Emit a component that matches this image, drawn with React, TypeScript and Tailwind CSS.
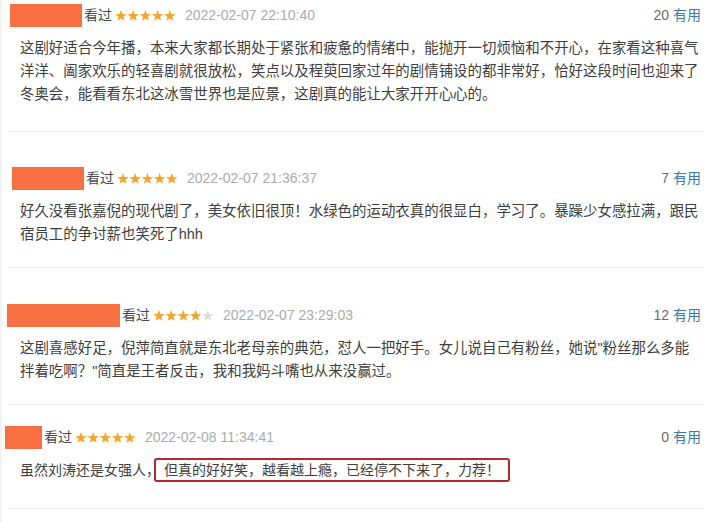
const STAR = "6,0 7.47,3.98 11.71,4.15 8.38,6.77 9.53,10.85 6,8.5 2.47,10.85 3.62,6.77 0.29,4.15 4.53,3.98";

type Review = {
  nameWidth: string;
  nameOffset: string;
  rating: number;
  time: string;
  votes: number;
  wrap: string;
  body: string;
  highlight?: string;
  textSize: string;
};

const reviews: Review[] = [
  {
    nameWidth: "w-[72px]",
    nameOffset: "ml-[8px]",
    rating: 5,
    time: "2022-02-07 22:10:40",
    votes: 20,
    wrap: "pt-[4px] pb-[25px]",
    textSize: "text-[14.45px]",
    body:
      "这剧好适合今年播，本来大家都长期处于紧张和疲惫的情绪中，能抛开一切烦恼和不开心，在家看这种喜气洋洋、阖家欢乐的轻喜剧就很放松，笑点以及程萸回家过年的剧情铺设的都非常好，恰好这段时间也迎来了冬奥会，能看看东北这冰雪世界也是应景，这剧真的能让大家开开心心的。",
  },
  {
    nameWidth: "w-[72px]",
    nameOffset: "ml-[10px]",
    rating: 5,
    time: "2022-02-07 21:36:37",
    votes: 7,
    wrap: "pt-[35px] pb-[21px]",
    textSize: "text-[14.45px]",
    body: "好久没看张嘉倪的现代剧了，美女依旧很顶！水绿色的运动衣真的很显白，学习了。暴躁少女感拉满，跟民宿员工的争讨薪也笑死了hhh",
  },
  {
    nameWidth: "w-[113px]",
    nameOffset: "ml-[5px]",
    rating: 4,
    time: "2022-02-07 23:29:03",
    votes: 12,
    wrap: "pt-[36px] pb-[21px]",
    textSize: "text-[14.45px]",
    body: "这剧喜感好足，倪萍简直就是东北老母亲的典范，怼人一把好手。女儿说自己有粉丝，她说\"粉丝那么多能拌着吃啊？\"简直是王者反击，我和我妈斗嘴也从来没赢过。",
  },
  {
    nameWidth: "w-[37px]",
    nameOffset: "ml-[3px]",
    rating: 5,
    time: "2022-02-08 11:34:41",
    votes: 0,
    wrap: "pt-[21px] pb-[26px]",
    textSize: "text-[14px]",
    body: "虽然刘涛还是女强人，",
    highlight: "但真的好好笑，越看越上瘾，已经停不下来了，力荐！",
  },
];

function Stars({ rating }: { rating: number }) {
  return (
    <svg width="61" height="12" viewBox="0 0 61 12" className="ml-[3px] shrink-0">
      {[0, 1, 2, 3, 4].map((i) => (
        <polygon
          key={i}
          points={STAR}
          transform={`translate(${i * 12.2} 0)`}
          fill={i < rating ? "#f5a52a" : "#dcdcdc"}
        />
      ))}
    </svg>
  );
}

function ReviewItem({ review }: { review: Review }) {
  return (
    <>
      <div className={review.wrap}>
        <div className="flex h-[23px] items-center pr-[15px] text-[14px]">
          <div className={`h-[23px] shrink-0 bg-[#f86f42] ${review.nameWidth} ${review.nameOffset}`} />
          <span className="ml-[2px] text-[#4a4a4a]">看过</span>
          <Stars rating={review.rating} />
          <span className="ml-[9px] text-[#ababab]">{review.time}</span>
          <span className="ml-auto text-[#6b6b6b]">{review.votes}</span>
          <span className="ml-[4px] text-[#3b78b0]">有用</span>
        </div>
        <p className={`mt-[10px] pl-[18px] pr-[15px] leading-[23px] text-[#3e3e3e] ${review.textSize}`}>
          {review.body}
          {review.highlight && (
            <span className="-ml-[6px] rounded-[3px] border-2 border-[#b0292c] px-[8px] py-[2px]">
              {review.highlight}
            </span>
          )}
        </p>
      </div>
      <div className="ml-[6px] mr-[14px] h-px bg-[#ececec]" />
    </>
  );
}

export default function App() {
  return (
    <div
      className="h-[522px] w-[716px] overflow-hidden border-l-2 border-[#f3f3f3] bg-white"
      style={{ fontFamily: '"Liberation Sans", "Noto Sans CJK SC", sans-serif' }}
    >
      {reviews.map((review) => (
        <ReviewItem key={review.time} review={review} />
      ))}
    </div>
  );
}
